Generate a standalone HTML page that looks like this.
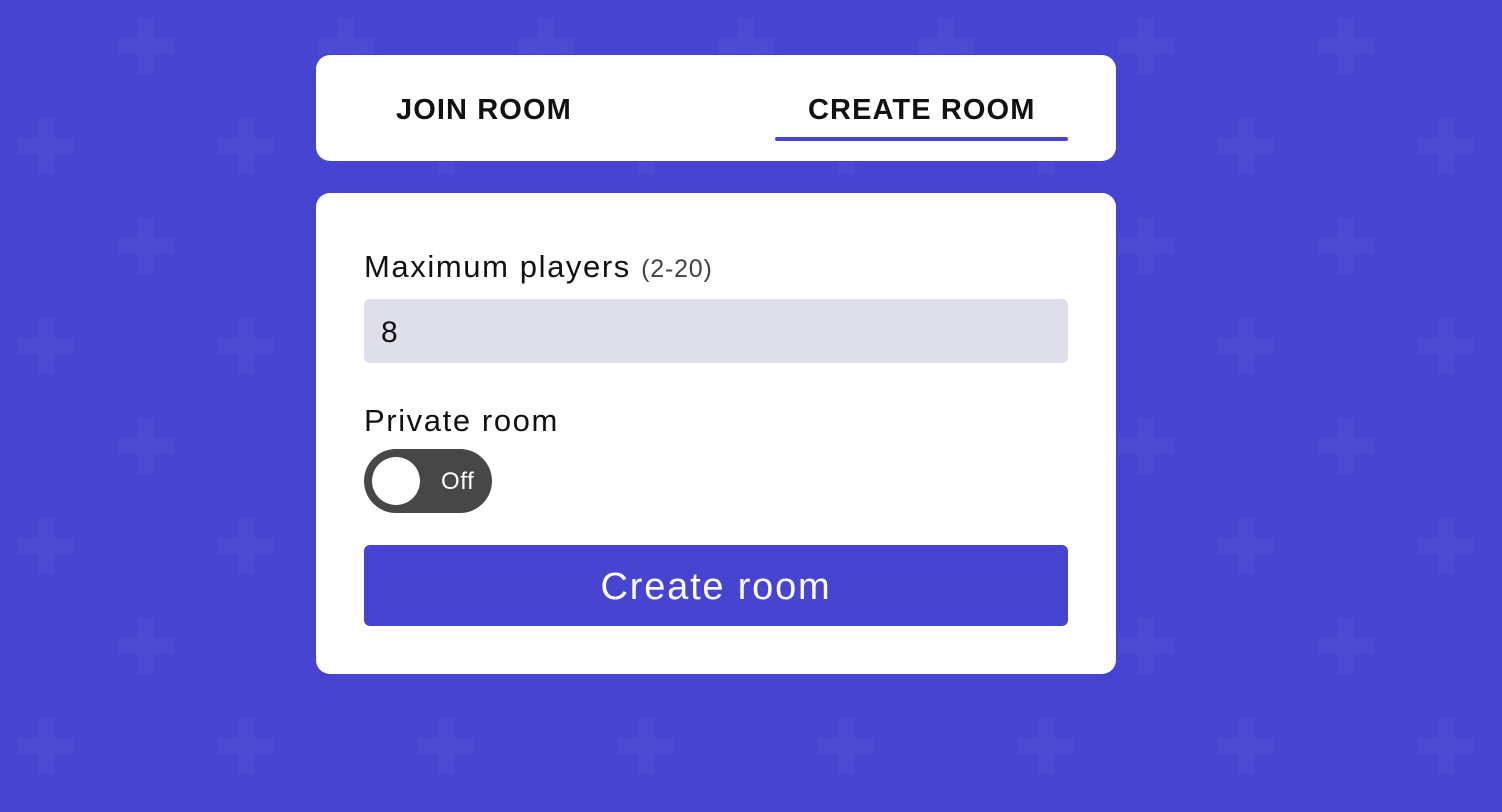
<!DOCTYPE html>
<html><head><style>
html,body{margin:0;padding:0}
body{width:1502px;height:812px;overflow:hidden;background-color:#4644d1;font-family:"Liberation Sans",sans-serif;position:relative}
.bg{position:absolute;inset:0;}
.card{position:absolute;left:316px;width:800px;background:#fff;border-radius:14px}
.tab{position:absolute;top:0;font-weight:bold;font-size:29px;letter-spacing:1.1px;color:#111;line-height:1}
.lbl{position:absolute;left:48px;font-size:31px;letter-spacing:1.6px;color:#111;line-height:1}
</style></head><body>
<svg class="bg" width="1502" height="812">
<defs><pattern id="p" width="200" height="200" patternUnits="userSpaceOnUse">
<g fill="#4d4bd4">
<rect x="138" y="18" width="16" height="56" rx="2"/><rect x="118" y="38" width="56" height="16" rx="2"/>
<rect x="38" y="118" width="16" height="56" rx="2"/><rect x="18" y="138" width="56" height="16" rx="2"/>
</g></pattern></defs>
<rect width="1502" height="812" fill="#4644d1"/>
<rect width="1502" height="812" fill="url(#p)"/>
</svg>
<div class="card" style="top:55px;height:106px">
<div class="tab" style="left:80px;top:41px">JOIN ROOM</div>
<div class="tab" style="left:492px;top:41px">CREATE ROOM</div>
<div style="position:absolute;left:459px;top:82px;width:293px;height:4px;background:#4644d1;border-radius:2px"></div>
</div>
<div class="card" style="top:193px;height:481px">
<div class="lbl" style="top:58px">Maximum players <span style="font-size:25px;color:#444;letter-spacing:.8px">(2-20)</span></div>
<div style="position:absolute;left:48px;top:106px;width:704px;height:64px;background:#dfdfea;border-radius:6px">
<div style="position:absolute;left:17px;top:19px;font-size:30px;color:#111;line-height:1">8</div></div>
<div class="lbl" style="top:212px">Private room</div>
<div style="position:absolute;left:48px;top:256px;width:128px;height:64px;background:#474747;border-radius:32px">
<div style="position:absolute;left:8px;top:8px;width:48px;height:48px;background:#fff;border-radius:50%"></div>
<div style="position:absolute;left:77px;top:21px;font-size:24px;letter-spacing:.6px;color:#fff;line-height:1">Off</div></div>
<div style="position:absolute;left:48px;top:352px;width:704px;height:81px;background:#4644d1;border-radius:6px;color:#fff;font-size:38px;letter-spacing:1.8px;text-align:center;line-height:84px">Create room</div>
</div>
</body></html>
